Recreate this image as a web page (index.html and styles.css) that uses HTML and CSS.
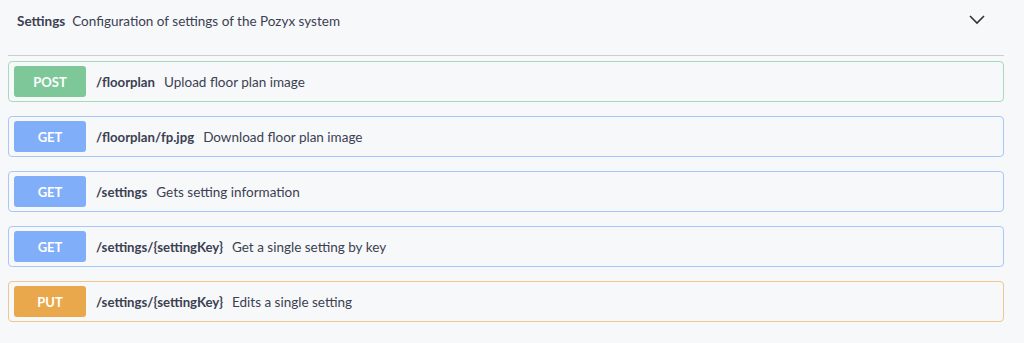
FILE: index.html
```html
<!DOCTYPE html>
<html>
<head>
<meta charset="utf-8">
<link rel="stylesheet" href="styles.css">
</head>
<body>
<div class="section">
  <div class="tag-header">
    <div class="tag-title"><span class="tag-name">Settings</span><span class="tag-desc">Configuration of settings of the Pozyx system</span></div>
    <svg class="chevron" width="16" height="10" viewBox="0 0 16 10"><path d="M1 1 L8 8 L15 1" fill="none" stroke="#333" stroke-width="1.6"/></svg>
  </div>
  <div class="ops">
    <div class="op op-post"><span class="badge">POST</span><span class="path">/floorplan</span><span class="desc">Upload floor plan image</span></div>
    <div class="op op-get"><span class="badge">GET</span><span class="path">/floorplan/fp.jpg</span><span class="desc">Download floor plan image</span></div>
    <div class="op op-get"><span class="badge">GET</span><span class="path">/settings</span><span class="desc">Gets setting information</span></div>
    <div class="op op-get"><span class="badge">GET</span><span class="path">/settings/{settingKey}</span><span class="desc">Get a single setting by key</span></div>
    <div class="op op-put"><span class="badge">PUT</span><span class="path">/settings/{settingKey}</span><span class="desc">Edits a single setting</span></div>
  </div>
</div>
</body>
</html>
```
FILE: styles.css
```css
html, body {
  margin: 0;
  padding: 0;
  background: #f7f8fa;
  font-family: Lato, "Open Sans", sans-serif;
  color: #3b4151;
}
.section {
  padding: 0 20px 0 8px;
}
.tag-header {
  display: flex;
  align-items: center;
  justify-content: space-between;
  box-sizing: border-box;
  height: 56px;
  padding: 0 19px 16px 9px;
  border-bottom: 1px solid #cdcecf;
  margin-bottom: 5px;
}
.tag-name {
  font-weight: 700;
  font-size: 13.5px;
  margin-right: 7px;
}
.tag-desc {
  font-size: 13.5px;
}
.chevron {
  display: block;
}
.ops {
  display: flex;
  flex-direction: column;
  gap: 14px;
}
.op {
  display: flex;
  align-items: center;
  border: 1px solid;
  border-radius: 4px;
  padding: 5px;
  height: 41px;
  box-sizing: border-box;
  background: #f7f8fa;
}
.badge {
  width: 72px;
  height: 31px;
  border-radius: 3px;
  color: #fff;
  font-weight: 700;
  font-size: 13px;
  display: flex;
  align-items: center;
  justify-content: center;
  margin-right: 10px;
}
.path {
  font-weight: 700;
  font-size: 13.2px;
  margin-right: 9px;
}
.desc {
  font-size: 13.5px;
}
.op-post { border-color: #a6dbb7; }
.op-post .badge { background: #7ec799; }
.op-get { border-color: #a9c7f7; }
.op-get .badge { background: #80aef8; }
.op-put { border-color: #efc590; }
.op-put .badge { background: #e9a84b; }
```
